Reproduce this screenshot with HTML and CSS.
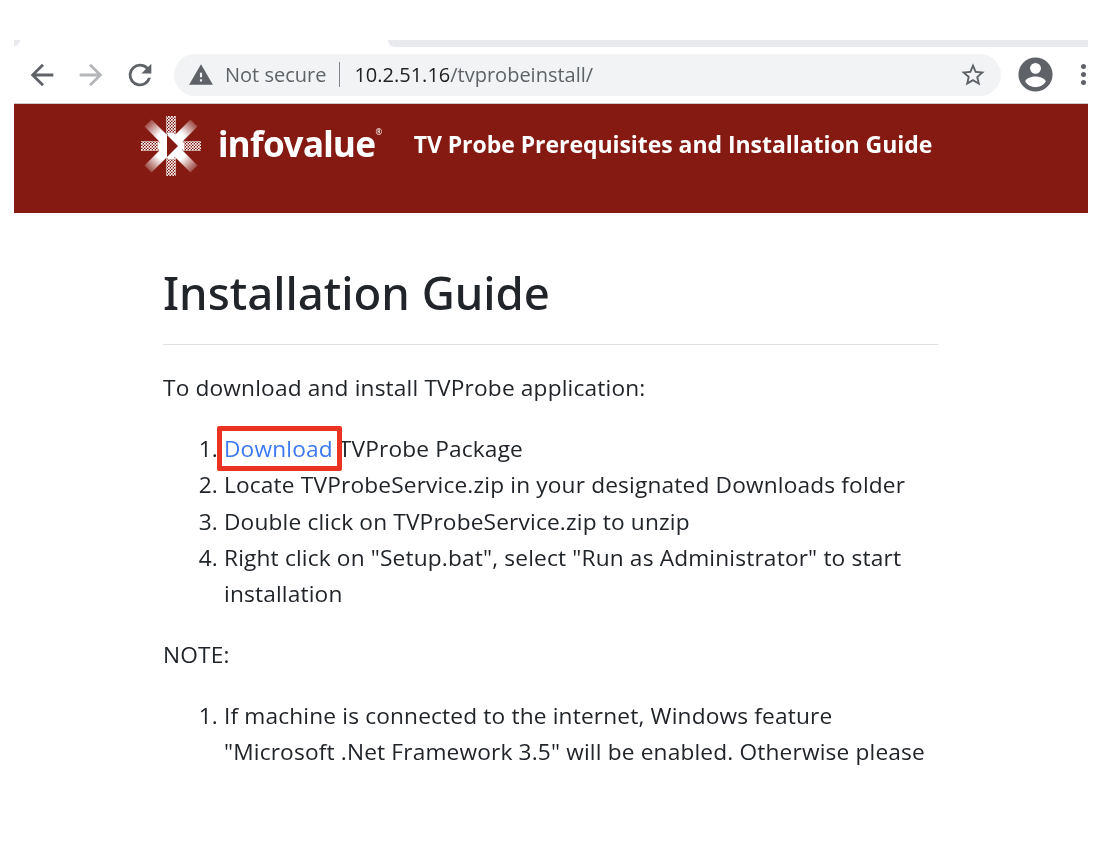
FILE: index.html
```html
<!DOCTYPE html>
<html lang="en">
<head>
<meta charset="utf-8">
<title>Installation Guide</title>
<link rel="stylesheet" href="styles.css">
</head>
<body>
<div class="shot">
  <div class="tabstrip"><span class="tab-corner"><i></i></span><span class="tab-rest"></span></div>
  <div class="toolbar">
    <svg class="nav" viewBox="0 0 24 24" width="34" height="34"><path fill="#5f6368" d="M20 11H7.83l5.59-5.59L12 4l-8 8 8 8 1.41-1.41L7.83 13H20v-2z"/></svg>
    <svg class="nav" viewBox="0 0 24 24" width="34" height="34"><path fill="#b4b6b9" d="M4 11h12.17l-5.59-5.59L12 4l8 8-8 8-1.41-1.41L16.17 13H4v-2z"/></svg>
    <svg class="nav" viewBox="0 0 24 24" width="34" height="34"><path fill="#5f6368" d="M17.65 6.35A7.96 7.96 0 0 0 12 4a8 8 0 1 0 7.73 10h-2.08A6 6 0 1 1 12 6c1.66 0 3.14.69 4.22 1.78L13 11h7V4l-2.35 2.35z"/></svg>
    <div class="omnibox">
      <svg class="warn" viewBox="0 0 24 24" width="26" height="26"><path fill="#5f6368" d="M1 21h22L12 2 1 21zm12-3h-2v-2h2v2zm0-4h-2v-4h2v4z"/></svg>
      <span class="secure">Not secure</span>
      <span class="divider"></span>
      <span class="url"><b>10.2.51.16</b>/tvprobeinstall/</span>
      <svg class="star" viewBox="0 0 24 24" width="28" height="28"><path fill="#5f6368" d="M22 9.24l-7.19-.62L12 2 9.19 8.63 2 9.24l5.46 4.73L5.82 21 12 17.27 18.18 21l-1.63-7.03L22 9.24zM12 15.4l-3.76 2.27 1-4.28-3.32-2.88 4.38-.38L12 6.1l1.71 4.04 4.38.38-3.32 2.88 1 4.28L12 15.4z"/></svg>
    </div>
    <svg class="avatar" viewBox="0 0 24 24" width="41" height="41"><path fill="#5f6368" d="M12 2a10 10 0 1 0 0 20 10 10 0 0 0 0-20zm0 3.2a3.2 3.2 0 1 1 0 6.4 3.2 3.2 0 0 1 0-6.4zm0 14.2a7.4 7.4 0 0 1-6-3.2c.03-2 4-3.1 6-3.1s5.97 1.1 6 3.1a7.4 7.4 0 0 1-6 3.2z"/></svg>
    <span class="dots"><i></i><i></i><i></i></span>
  </div>
  <header class="banner">
    <svg class="logo-mark" viewBox="0 0 60 60" width="60" height="60">
      <defs>
        <pattern id="stipple" width="3" height="3" patternUnits="userSpaceOnUse">
          <rect width="1.7" height="1.7" fill="#fff"/>
          <rect x="1.5" y="1.5" width="1.5" height="1.5" fill="#fff"/>
        </pattern>
        <radialGradient id="fade" gradientUnits="userSpaceOnUse" cx="30" cy="30" r="33">
          <stop offset=".5" stop-color="#fff"/>
          <stop offset="1" stop-color="#fff" stop-opacity=".2"/>
        </radialGradient>
      </defs>
      <path fill="url(#stipple)" d="M25 0h10v22H25zM25 38h10v22H25zM0 25h22v10H0zM38 25h22v10H38z"/>
      <path fill="#fff" d="M26.5 17h7v26h-7zM17 26.5h26v7H17z"/>
      <g stroke="url(#fade)" stroke-width="10" fill="none">
        <path d="M30 30L7 7M30 30L53 7M30 30L7 53M30 30L53 53"/>
      </g>
      <path fill="#851a12" d="M26 19l11 11-11 11z"/>
    </svg>
    <span class="wordmark">infovalue<sup>®</sup></span>
    <span class="banner-title">TV Probe Prerequisites and Installation Guide</span>
  </header>
  <main class="content">
    <h1>Installation Guide</h1>
    <hr>
    <p>To download and install TVProbe application:</p>
    <ol>
      <li><a class="boxed" href="#">Download</a> TVProbe Package</li>
      <li>Locate TVProbeService.zip in your designated Downloads folder</li>
      <li>Double click on TVProbeService.zip to unzip</li>
      <li>Right click on "Setup.bat", select "Run as Administrator" to start installation</li>
    </ol>
    <p>NOTE:</p>
    <ol>
      <li>If machine is connected to the internet, Windows feature "Microsoft .Net Framework 3.5" will be enabled. Otherwise please</li>
    </ol>
  </main>
</div>
</body>
</html>
```
FILE: styles.css
```css
* { box-sizing: border-box; }
html, body { margin: 0; padding: 0; background: #fff; }
body { font-family: "Open Sans", "Noto Sans", sans-serif; color: #212529; }
.shot { width: 1074px; height: 728px; margin: 40px 0 0 14px; overflow: hidden; background: #fff; filter: blur(.35px); }

.tabstrip { display: flex; height: 7px; }
.tab-corner { width: 374px; }
.tab-corner i { display: block; width: 6px; height: 6px; background: #e8eaed; border-bottom-right-radius: 100%; }
.tab-rest { flex: 1; background: #e8eaed; border-bottom-left-radius: 8px; }

.toolbar { display: flex; align-items: center; height: 57px; padding: 0 0 1px 11px; border-bottom: 1px solid #c9cbce; }
.nav { margin-right: 15px; flex: none; }
.omnibox { display: flex; align-items: center; flex: none; width: 827px; height: 42px; margin-left: 2px; padding: 0 14px; border-radius: 21px; background: #f1f3f4; }
.warn { flex: none; }
.secure { margin-left: 11px; font-size: 20px; color: #5f6368; }
.divider { width: 1px; height: 25px; margin: 0 14px 0 13px; background: #80868b; }
.url { font-size: 20px; color: #5f6368; }
.url b { font-weight: 400; color: #202124; }
.star { margin-left: auto; }
.avatar { margin-left: 14px; flex: none; }
.dots { display: flex; flex-direction: column; gap: 3px; margin-left: 25px; }
.dots i { display: block; width: 5px; height: 5px; border-radius: 50%; background: #5f6368; }

.banner { display: flex; align-items: flex-start; height: 109px; padding: 12px 0 0 127px; background: #851a12; color: #fff; }
.logo-mark { flex: none; }
.wordmark { margin: 3px 0 0 17px; font-family: "Noto Sans", sans-serif; font-size: 35px; font-weight: 700; line-height: 50px; letter-spacing: -.6px; }
.wordmark sup { font-size: 8px; font-weight: 400; vertical-align: 22px; line-height: 0; }
.banner-title { margin: 12px 0 0 32px; font-size: 23px; font-weight: 700; line-height: 32px; letter-spacing: -.05px; }

.content { width: 775px; margin-left: 149px; padding-top: 49px; font-size: 22.7px; line-height: 36.3px; letter-spacing: .16px; }
h1 { margin: 0; font-family: "Noto Sans", sans-serif; font-size: 45.5px; font-weight: 500; line-height: 60px; letter-spacing: 0; }
hr { margin: 22px 0 25px; border: 0; border-top: 1px solid #dfe0e1; }
p { margin: 0 0 24.7px; }
ol { margin: 0 0 24.7px; padding-left: 61px; }
.boxed { position: relative; color: #3b78f2; text-decoration: none; }
.boxed::after { content: ""; position: absolute; left: -7px; right: -9px; top: -7px; bottom: -7px; border: 5px solid #ea3323; border-radius: 2px; }
```
